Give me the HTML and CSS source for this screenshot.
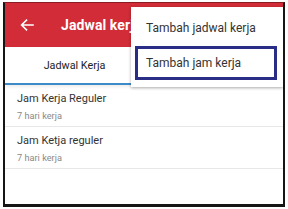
FILE: index.html
```html
<!DOCTYPE html>
<html>
<head>
<meta charset="utf-8">
<link rel="stylesheet" href="styles.css">
</head>
<body>
<div class="frame">
  <header class="appbar">
    <svg class="back" width="14" height="12" viewBox="0 0 14 12"><path d="M13 6H2M6.5 1.2L1.6 6l4.9 4.8" fill="none" stroke="#fff" stroke-width="1.6" stroke-linecap="square"/></svg>
    <span class="title">Jadwal kerja</span>
  </header>
  <nav class="tabs">
    <div class="tab active">Jadwal Kerja</div>
    <div class="tab"></div>
  </nav>
  <ul class="list">
    <li class="item"><div class="name">Jam Kerja Reguler</div><div class="sub">7 hari kerja</div></li>
    <li class="item"><div class="name">Jam Ketja reguler</div><div class="sub">7 hari kerja</div></li>
  </ul>
  <div class="menu">
    <div class="mitem">Tambah jadwal kerja</div>
    <div class="mitem selected">Tambah jam kerja</div>
  </div>
</div>
</body>
</html>
```
FILE: styles.css
```css
html, body { margin: 0; padding: 0; background: #fff; }
body { font-family: Roboto, "Noto Sans", sans-serif; width: 288px; height: 209px; overflow: hidden; }
.frame {
  position: relative;
  margin: 2px 0 0 3px;
  width: 278px;
  height: 201px;
  border-left: 2px solid #151515;
  border-right: 2px solid #151515;
  border-bottom: 3px solid #151515;
  border-top: 1px solid #8a1c24;
  background: #fff;
  overflow: hidden;
}
.appbar {
  height: 44px;
  background: #d12c37;
  display: flex;
  align-items: center;
  padding-left: 15px;
}
.back { margin-right: 27px; }
.title { color: #fff; font-weight: 700; font-size: 14px; letter-spacing: 0.1px; }
.tabs {
  display: flex;
  height: 38px;
  box-shadow: 0 2px 3px rgba(0,0,0,0.08);
  position: relative;
}
.tab { flex: 1; display: flex; align-items: center; justify-content: center; font-size: 10.8px; color: #222; }
.tab.active { border-bottom: 2px solid #3d8ac9; height: 36px; }
.list { list-style: none; margin: 0; padding: 0; }
.item { padding: 7px 12px 0; height: 34px; border-bottom: 1px solid #e8e8e8; }
.name { font-size: 11px; color: #333; line-height: 14px; }
.sub { font-size: 9.2px; color: #8a8a8a; margin-top: 4px; line-height: 11px; }
.menu {
  position: absolute;
  left: 126px;
  top: 4px;
  width: 152px;
  height: 80px;
  background: #fff;
  box-shadow: 0 1px 3px rgba(0,0,0,0.3);
  display: flex;
  flex-direction: column;
  padding-top: 2px;
  box-sizing: border-box;
}
.mitem { font-size: 12px; color: #333; height: 37px; flex: none; display: flex; align-items: center; padding-left: 15px; }
.mitem.selected { margin: 0 6px 0 4px; height: 34px; border: 3px solid #2a2d86; padding-left: 8px; box-sizing: border-box; }
```
